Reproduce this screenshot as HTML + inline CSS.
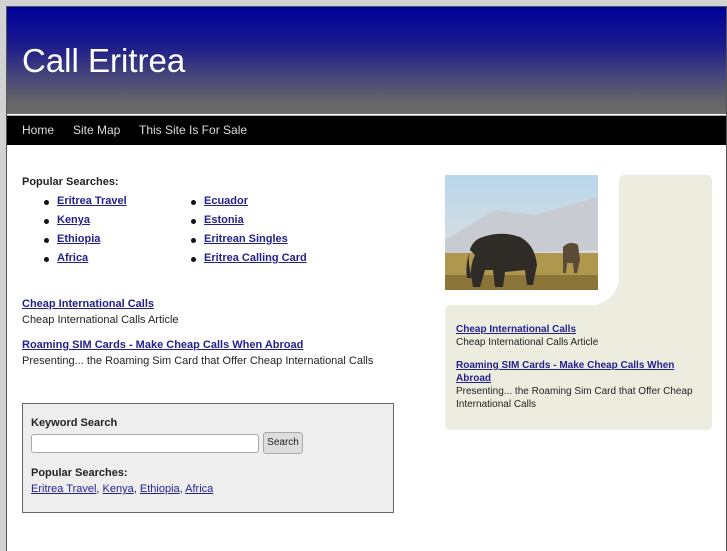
<!DOCTYPE html>
<html><head><style>
*{margin:0;padding:0;box-sizing:border-box}
body{width:727px;height:545px;background:#d2d2d2;font-family:"Liberation Sans",sans-serif;font-size:11px;color:#222;overflow:hidden;position:relative}
#page{position:absolute;left:6px;top:6px;width:721px;height:545px;background:#fff;border:1px solid #555;border-bottom:none}
#hdr{position:absolute;left:0;top:0;width:100%;height:107px;background:linear-gradient(#00009c 0%,#1a1a8c 35%,#46467a 65%,#676767 90%,#6a6a6a)}
#hdr h1{position:absolute;left:15px;top:35px;font-weight:normal;color:#fff;font-size:33px}
#nav{position:absolute;left:0;top:108px;width:100%;height:30px;background:#000;border-top:1px solid #aaa;color:#ddd;font-size:12px}
#nav span{position:absolute;top:7px}
a{color:#22228f;text-decoration:underline}
.b{font-weight:bold}
.abs{position:absolute}
ul{list-style:none}
li{position:relative;height:19px;padding-left:35px;font-weight:bold}
li:before{content:"";position:absolute;left:22px;top:5px;width:5px;height:5px;border-radius:50%;background:#111}
</style></head><body>
<div id="page">
<div id="hdr"><h1>Call Eritrea</h1></div>
<div id="nav"><span style="left:15px">Home</span><span style="left:66px">Site Map</span><span style="left:132px">This Site Is For Sale</span></div>
<div class="abs b" style="left:15px;top:169px">Popular Searches:</div>
<ul class="abs" style="left:15px;top:188px;width:150px"><li><a>Eritrea Travel</a></li><li><a>Kenya</a></li><li><a>Ethiopia</a></li><li><a>Africa</a></li></ul>
<ul class="abs" style="left:162px;top:188px;width:200px"><li><a>Ecuador</a></li><li><a>Estonia</a></li><li><a>Eritrean Singles</a></li><li><a>Eritrea Calling Card</a></li></ul>
<div class="abs" style="left:15px;top:289px;line-height:16px"><a class="b">Cheap International Calls</a><br>Cheap International Calls Article</div>
<div class="abs" style="left:15px;top:330px;line-height:16px"><a class="b">Roaming SIM Cards - Make Cheap Calls When Abroad</a><br>Presenting... the Roaming Sim Card that Offer Cheap International Calls</div>
<div class="abs" style="left:15px;top:396px;width:372px;height:110px;background:#eee;border:1px solid #666">
 <div class="abs b" style="left:8px;top:13px">Keyword Search</div>
 <div class="abs" style="left:8px;top:30px;width:228px;height:19px;background:#fff;border:1px solid #aaa;border-radius:3px"></div>
 <div class="abs" style="left:240px;top:28px;width:40px;height:22px;background:#ddd;border:1px solid #aaa;border-radius:3px;font-size:10px;text-align:center;line-height:20px">Search</div>
 <div class="abs b" style="left:8px;top:63px">Popular Searches:</div>
 <div class="abs" style="left:8px;top:79px"><a>Eritrea Travel</a>, <a>Kenya</a>, <a>Ethiopia</a>, <a>Africa</a></div>
</div>
<div class="abs" style="left:612px;top:168px;width:93px;height:140px;background:#ededdf;border-radius:5px 5px 0 0"></div>
<div class="abs" style="left:438px;top:298px;width:267px;height:125px;background:#ededdf;border-radius:5px"></div>
<div class="abs" style="left:590px;top:260px;width:30px;height:40px;background:#ededdf"></div>
<div class="abs" style="left:570px;top:240px;width:42px;height:58px;background:#fff;border-bottom-right-radius:28px"></div>
<svg class="abs" style="left:438px;top:168px" width="153" height="115">
<defs><linearGradient id="s" x1="0" y1="0" x2="0" y2="1"><stop offset="0" stop-color="#b9d6ea"/><stop offset="0.6" stop-color="#d5dde3"/></linearGradient></defs>
<rect width="153" height="115" fill="url(#s)"/>
<path d="M0 65 L50 35 L90 40 L153 22 L153 75 L0 80Z" fill="#c8ccd2"/>
<rect y="78" width="153" height="37" fill="#b0974e"/>
<rect y="100" width="153" height="15" fill="#8a7438"/>
<path d="M25 95 Q20 70 35 63 Q55 55 75 62 Q90 70 92 90 L88 110 L82 110 L80 95 L60 97 L58 112 L50 112 L48 95 L40 95 L35 112 L28 112 Z M25 75 Q20 90 22 103 L26 103 Q25 90 30 80Z" fill="#2f2b27"/>
<path d="M118 72 Q125 65 133 70 L135 85 L132 98 L129 98 L128 88 L122 88 L121 98 L118 98 Z" fill="#5a4a36"/>
</svg>
<div class="abs" style="left:449px;top:316px;line-height:13px;font-size:10px;width:250px"><a class="b">Cheap International Calls</a><br>Cheap International Calls Article</div>
<div class="abs" style="left:449px;top:352px;line-height:13px;font-size:10px;width:250px"><a class="b">Roaming SIM Cards - Make Cheap Calls When Abroad</a><br>Presenting... the Roaming Sim Card that Offer Cheap International Calls</div>
</div>
</body></html>
